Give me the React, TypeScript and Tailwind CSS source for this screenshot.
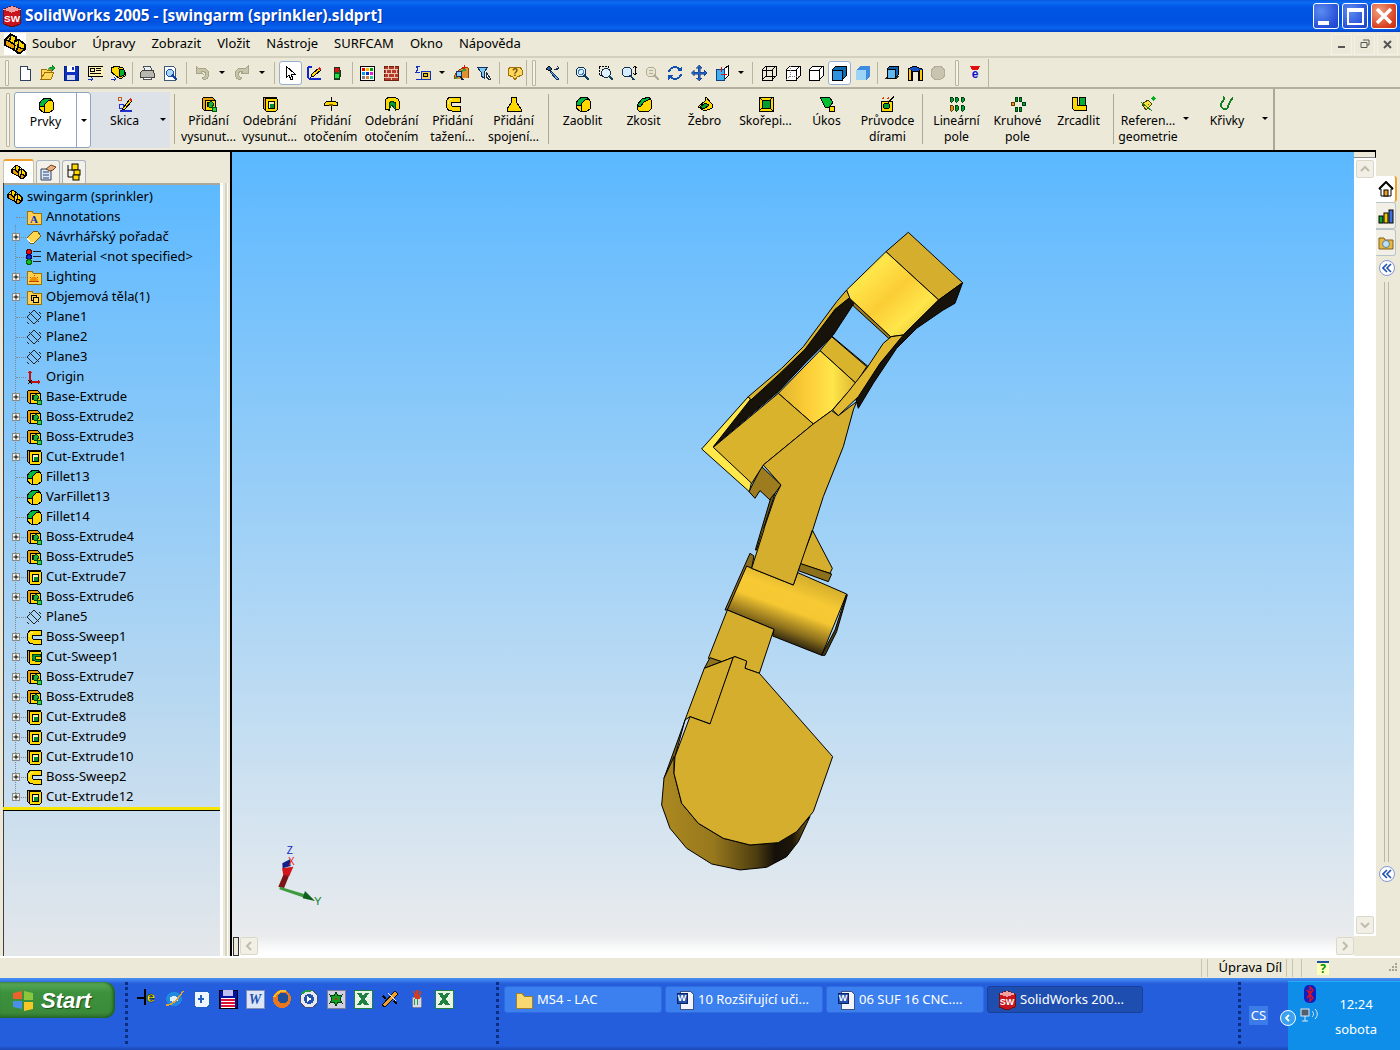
import React from 'react';

type P = { children: React.ReactNode; s?: number; v?: number };
const Svg = ({ children, s = 16, v = 16 }: P) => (
  <svg width={s} height={s} viewBox={`0 0 ${v} ${v}`} shapeRendering="crispEdges" className="shrink-0">{children}</svg>
);

const K = '#000';
const Y = '#ffd800';
const O = '#e8a000';

// feature icons shared by tree and command manager
const icons: Record<string, React.ReactNode> = {
  part: <><path d="M1 5 5 1l4 2-1 3 3-1 4 3v4l-4 3-4-3-6-3Z" fill={Y} stroke={K} strokeWidth="1.300" /><path d="M5 1 4 6l3 2 1-2M11 5l-1 5 5 2" stroke={K} fill="none" /><path d="M4 6 1 5v4l6 3 1-3Z" fill={O} stroke={K} /><path d="M10 10l-1 3 2 2 4-3Z" fill={O} stroke={K} /></>,
  boss: <><path d="M1 3 3 1h8l3 3v10H3l-2-2Z" fill={O} stroke={K} /><path d="M4 4h10v10H4Z" fill={Y} stroke={K} /><path d="M6 6h4v4H6Z" fill="#fff6b0" stroke={K} /><path d="M7 8l3-3 3 3-2 3H8Z" fill="#20b040" stroke="#004010" /><rect x="11" y="11" width="4" height="4" fill="#30d050" stroke="#005010" /></>,
  cut: <><path d="M1 2 3 1h11v13H3L1 12Z" fill={O} stroke={K} /><rect x="3" y="2" width="12" height="13" rx="1" fill={Y} stroke={K} /><rect x="6" y="5" width="6" height="7" fill="#fff5b0" stroke={K} /><path d="M8 8h4v4H8Z" fill="#009030" /></>,
  fillet: <><path d="M1 7Q3 2 8 1h4l3 4v8l-3 2H5l-4-3Z" fill={Y} stroke={K} /><path d="M1 8Q3 2 8 1h4l1 2Q8 4 6 9l-3 1Z" fill="#00b840" stroke={K} /><path d="M13 3l2 2M6 9l1 6" stroke={K} /></>,
  sweep: <><path d="M15 1H7C3 1 1 4 1 8s2 7 6 7h8V10H7C6.500 10 6 9 6 8s.500-2 1-2h8Z" fill={Y} stroke={K} /><path d="M3 8c0-2 2-4 4-5" stroke="#fff7a0" fill="none" /></>,
  sweepcut: <><path d="M1 2 3 1h11v13H3L1 12Z" fill={O} stroke={K} /><rect x="3" y="2" width="12" height="13" rx="1" fill={Y} stroke={K} /><path d="M14 5H9C7 5 6 7 6 8.500S7 12 9 12h5v-2H9V7h5Z" fill="#00a030" stroke="#004010" /></>,
  folderA: <><path d="M1 4V2h5l1 2h8v11H1Z" fill="#ffd050" stroke="#a07000" /><text x="8" y="13.500" fontSize="11" fontWeight="700" fontFamily="Liberation Serif" fill="#1030c0" textAnchor="middle">A</text></>,
  book: <><path d="M1 9 8 2h3l4 5-7 7H4Z" fill="#ffd850" stroke="#7a5a00" /><path d="M1 9l3 4h4" fill="none" stroke="#fff" /></>,
  material: <><circle cx="3" cy="3" r="2.400" fill="#e01010" stroke="#600" /><circle cx="3" cy="8" r="2.400" fill="#1030d0" stroke="#006" /><circle cx="3" cy="13" r="2.400" fill="#10c020" stroke="#060" /><path d="M7 2.500h8M7 7.500h8M7 12.500h8" stroke="#222" strokeWidth="1.500" /></>,
  lighting: <><path d="M1 4V2h5l1 2h8v11H1Z" fill="#ffd050" stroke="#a07000" /><path d="M4 12a4 4 0 0 1 8 0Z" fill="#f09000" /><path d="M8 6v1M4 8l1 1M12 8l-1 1M3 12h10" stroke="#c04000" /></>,
  bodies: <><path d="M1 4V2h5l1 2h8v11H1Z" fill="#ffd050" stroke="#a07000" /><rect x="5" y="6" width="5" height="5" fill="none" stroke={K} /><rect x="7" y="8" width="5" height="5" fill="#ffe060" stroke={K} /></>,
  plane: <path d="M1 8 8 1l7 7-7 7ZM3 3l10 10M13 3l2 2M1 13l2 2" fill="none" stroke="#222" />,
  origin: <><path d="M4 13V3M4 13h10" stroke="#c01010" strokeWidth="1.200" /><path d="M4 1 2 4h4ZM15 13l-3-2v4Z" fill="#c01010" /><path d="M2 11l4 4M6 11l-4 4" stroke={K} /></>,
  sketch: <><path d="M3 15h12" stroke="#2030d0" strokeWidth="1.400" /><circle cx="3" cy="3" r="2" fill="none" stroke="#c06020" /><path d="M2 8h4v4H2Z" fill="none" stroke="#2030d0" /><path d="M6 12 13 3l2 2-7 8-3 1Z" fill={Y} stroke={K} /><path d="M13 3l2 2" stroke="#e02020" strokeWidth="2" /></>,
  tsketch: <><path d="M2 2v10q0 2 2 2h11" fill="none" stroke="#1028d0" strokeWidth="1.600" /><path d="M2 2h4" stroke="#1028d0" strokeWidth="1.600" /><path d="M5 12l1-3 7-6 2 2-7 6Z" fill={Y} stroke={K} /><path d="M13 3l2 2" stroke="#e02020" strokeWidth="2" /></>,
  revolve: <><path d="M8 1v14" stroke={K} /><path d="M1 9c0-3 3-4 7-4s7 1 7 4l-3 1-4-2-4 2Z" fill={Y} stroke={K} /><ellipse cx="8" cy="9" rx="2" ry="1" fill="#806000" /></>,
  revolvecut: <><path d="M1 13V5c0-2 3-4 7-4s7 2 7 4v8l-4 1V6H5v8Z" fill={Y} stroke={K} /><path d="M5 13V7l3-2 3 2v6L8 9Z" fill="#00a030" stroke="#004010" /></>,
  loft: <path d="M6 1h4l1 6 4 6v2H1v-2l4-6Z" fill={Y} stroke={K} />,
  chamfer: <><path d="M1 9 6 3l7-2 2 3v9l-2 2H3l-2-2Z" fill={Y} stroke={K} /><path d="M1 9 6 3l7-2 1 2-6 3-4 5Z" fill="#00b840" stroke={K} /></>,
  rib: <><path d="M1 11 8 5l1-4 6 7v4l-7 3Z" fill={Y} stroke={K} /><path d="M3 11 8 7l4 2-5 4Z" fill="#00a030" stroke={K} /></>,
  shell: <><rect x="1" y="1" width="14" height="14" fill={Y} stroke={K} /><rect x="4" y="4" width="8" height="8" fill="#00a030" stroke={K} /><path d="M1 1l3 3M15 1l-3 3M1 15l3-3M15 15l-3-3" stroke={K} /></>,
  draft: <><path d="M1 1h9l4 5-3 5H6Z" fill="#00c030" stroke={K} /><rect x="10" y="10" width="5" height="5" fill={Y} stroke={K} /></>,
  hole: <><rect x="1" y="5" width="11" height="10" fill={Y} stroke={K} /><circle cx="6.500" cy="10" r="3" fill="#00a030" stroke={K} /><path d="M8 6l6-5" stroke={K} strokeWidth="1.600" /><path d="M2 2h2M3 1v2M7 2h2M8 1v2" stroke="#e04000" /></>,
  linear: <><g fill="#00a030" stroke="#004010"><rect x="1" y="1" width="3" height="5" rx="1" /><rect x="6" y="1" width="3" height="5" rx="1" /><rect x="12" y="1" width="3" height="5" rx="1" /><rect x="6" y="9" width="3" height="6" rx="1" /><rect x="12" y="9" width="3" height="6" rx="1" /></g><rect x="1" y="9" width="3" height="6" rx="1" fill="#f09000" stroke="#604000" /></>,
  circular: <><g fill="#00a030" stroke="#004010"><rect x="5" y="1" width="2" height="4" /><rect x="9" y="1" width="2" height="4" /><rect x="5" y="11" width="2" height="4" /><rect x="9" y="11" width="2" height="4" /><rect x="12" y="6" width="3" height="3" /></g><rect x="1" y="6" width="3" height="3" fill="#f09000" stroke="#604000" /></>,
  mirror: <><path d="M1 1h5v8h9v5H3l-2-2Z" fill={Y} stroke={K} /><rect x="8" y="1" width="6" height="8" fill="#00b030" stroke={K} /></>,
  refgeom: <><path d="M2 8 8 4l4 4-6 6Z" fill="#ffe040" stroke="#404000" /><path d="M1 6l11 9M8 8l1 1" stroke="#208020" /><path d="M12 4l3-3M15 4l-3-3M13 0v5M11 2h5" stroke="#00b020" /></>,
  curves: <path d="M4 1c4 2-2 4-2 8 0 4 6 6 7 2 1-3 1-6 5-9" fill="none" stroke="#108020" strokeWidth="1.800" />,
  // standard toolbar
  new: <><path d="M3 1h7l3 3v11H3Z" fill="#fff" stroke="#304060" /><path d="M10 1v3h3" fill="#d8e4f8" stroke="#304060" /></>,
  open: <><path d="M1 14V4h5l1 1h4v2H5l-4 7h10l3-7H5" fill="#ffd860" stroke="#a07000" /><path d="M8 4c1-2 3-2 4-2V0l3 3-3 3V4c-1 0-3 0-4 0Z" fill="#10b030" stroke="#006000" strokeWidth=".500" /></>,
  save: <><rect x="1" y="1" width="14" height="14" fill="#1030c0" stroke="#002080" /><rect x="4" y="1" width="8" height="6" fill="#fff" /><rect x="4" y="10" width="8" height="5" fill="#d0d8f0" /><rect x="9" y="2" width="2" height="3" fill="#1030c0" /></>,
  props: <><rect x="1" y="1" width="15" height="10" fill="#fff0b0" stroke={K} /><path d="M3 3h4v3H3ZM9 3h5M9 5h5M3 8h11" stroke={K} fill="none" /><path d="M1 14h5M4 12l2 2-2 2" stroke="#1030c0" fill="none" /></>,
  rebuild: <><path d="M1 3 6 1l7 2 2 4v4l-5 3-5-4-4-3Z" fill={Y} stroke={K} /><path d="M9 4l5 1v5l-4 2Z" fill="#00b030" stroke={K} /><path d="M1 14h5M4 12l2 2-2 2" stroke="#1030c0" fill="none" /></>,
  print: <><path d="M4 1h7l2 4H6Z" fill="#eee" stroke="#405060" /><path d="M1 8l3-3h10l1 3v4H1Z" fill="#b8b8b0" stroke="#404040" /><path d="M4 12h8v2H4Z" fill="#fff" stroke="#505050" /></>,
  preview: <><path d="M2 1h9l2 2v12H2Z" fill="#fff" stroke="#405878" /><circle cx="8" cy="8" r="3.500" fill="#a8d8ff" stroke="#2050a0" /><path d="M10 10 15 15" stroke="#1040a0" strokeWidth="2" /></>,
  undo: <path d="M2 8V1l3 3c4-2 10 0 10 5 0 3-2 5-5 6l-2-2c2-1 4-2 4-4s-3-3-5-2l2 2Z" fill="#c8c4a8" stroke="#a8a48c" />,
  redo: <path d="M14 8V1l-3 3C7 2 1 4 1 9c0 3 2 5 5 6l2-2c-2-1-4-2-4-4s3-3 5-2L7 8Z" fill="#c8c4a8" stroke="#a8a48c" />,
  cursor: <path d="M4 1v12l3-3 2 5 2-1-2-5h4Z" fill="#fff" stroke={K} />,
  traffic: <><rect x="5" y="2" width="6" height="13" rx="3" fill="#106020" stroke="#203020" /><circle cx="8" cy="5" r="2.400" fill="#e01010" /><circle cx="8" cy="11" r="2.400" fill="#20e040" /></>,
  grid: <><rect x="1" y="1" width="14" height="14" fill="#fff" stroke={K} /><g><rect x="3" y="3" width="3" height="3" fill="#f00000" /><rect x="7" y="3" width="3" height="3" fill="#f0c000" /><rect x="11" y="3" width="3" height="3" fill="#00a000" /><rect x="3" y="7" width="3" height="3" fill="#00a0f0" /><rect x="7" y="7" width="3" height="3" fill="#0030d0" /><rect x="11" y="7" width="3" height="3" fill="#e020e0" /><rect x="3" y="11" width="3" height="3" fill="#808080" /><rect x="7" y="11" width="3" height="3" fill="#e08040" /><rect x="11" y="11" width="3" height="3" fill="#20d0a0" /></g></>,
  bricks: <><rect x="1" y="1" width="14" height="14" fill="#b83a2a" stroke="#702010" /><path d="M1 4h14M1 8h14M1 12h14M5 1v3M11 1v3M8 4v4M3 4v4M13 4v4M5 8v4M11 8v4M8 12v3" stroke="#e8c8b0" /></>,
  formula: <><path d="M5 1H1l2 3-2 3h4" fill="none" stroke="#1030c0" /><rect x="6" y="6" width="9" height="8" fill="#f0d060" stroke="#1030c0" /><circle cx="10.500" cy="10" r="2" fill="#e8c000" stroke={K} /><path d="M1 14h5" stroke="#1030c0" /></>,
  rainbow: <><path d="M1 14C2 6 8 2 15 3v10" fill="#e09030" stroke="#a04000" /><path d="M3 14C4 8 9 5 13 5" stroke="#30a040" strokeWidth="2" fill="none" /><circle cx="6" cy="9" r="3" fill="#80d0ff" stroke="#203060" /><path d="M7 11 10 15" stroke="#102040" strokeWidth="2" /><path d="M11 0v3M9 2h4" stroke="#e01010" /></>,
  filter: <><path d="M1 2h11L8 7v6l-3-2V7Z" fill="#80c8f0" stroke="#103060" /><path d="M10 7l2 3 3 4-2 1-3-4Z" fill="#fff" stroke="#203040" /></>,
  help: <><path d="M3 2h10l2 3v5l-5 2-2 3-2-3-5-2V5Z" fill="#ffd860" stroke="#a07000" /><text x="8" y="11" fontSize="10" fontWeight="700" textAnchor="middle" fontFamily="Liberation Sans" fill="#705000">?</text></>,
  tool: <><path d="M1 4l3-3 3 3-2 2Z" fill="#2060a0" stroke={K} /><path d="M6 6l8 8-2 1-7-8Z" fill="#70b0e0" stroke="#103060" /><path d="M9 5l5-2M12 1l2 2-2 2" stroke="#203050" fill="none" /></>,
  zoomfit: <><circle cx="7" cy="7" r="5" fill="#e0f0ff" stroke="#103050" /><circle cx="7" cy="7" r="2.500" fill="none" stroke="#4080c0" /><path d="M10 10 15 15" stroke="#104060" strokeWidth="2" /></>,
  zoomarea: <><rect x="1" y="1" width="9" height="9" fill="none" stroke={K} strokeDasharray="2 1" /><circle cx="8" cy="8" r="4.500" fill="#e0f0ff" stroke="#103050" /><path d="M11 11l4 4" stroke="#104060" strokeWidth="2" /></>,
  zoominout: <><circle cx="6" cy="7" r="5" fill="#d8ecff" stroke="#103050" /><path d="M9 10 13 15" stroke="#104060" strokeWidth="2" /><path d="M14 1v9M12 3l2-2 2 2M12 8l2 2 2-2" stroke={K} fill="none" /></>,
  zoomsel: <><circle cx="7" cy="7" r="5" fill="#e8e4d0" stroke="#b0ac98" /><path d="M5 5h4M5 8h4" stroke="#b0ac98" /><path d="M10 10 15 15" stroke="#b0ac98" strokeWidth="2" /></>,
  rotate: <><path d="M2 7a6 6 0 0 1 11-2" fill="none" stroke="#1050b0" strokeWidth="2" /><path d="M14 9A6 6 0 0 1 3 11" fill="none" stroke="#1050b0" strokeWidth="2" /><path d="M15 1v5h-5ZM1 15v-5h5Z" fill="#1050b0" /></>,
  pan: <path d="M8 0l3 3H9v4h4V5l3 3-3 3V9H9v4h2l-3 3-3-3h2V9H3v2L0 8l3-3v2h4V3H5Z" fill="#2060c0" stroke="#103070" strokeWidth=".500" />,
  view: <><path d="M2 4h8l4-3v10l-4 4H2Z" fill="#fff" stroke={K} /><path d="M2 4h8v11H2Z" fill="#40b0f0" stroke="#104080" /><path d="M7 9h6M7 2v5" stroke="#e01010" /></>,
  wire: <path d="M1 5h10v10H1ZM1 5l4-4h10v10l-4 4M11 5l4-4M5 1v10h10M5 11l-4 4" fill="none" stroke={K} />,
  hidden: <><path d="M1 5h10v10H1ZM1 5l4-4h10v10l-4 4M11 5l4-4" fill="#fff" stroke={K} /><path d="M5 1v10h10M5 11l-4 4" fill="none" stroke="#808080" strokeDasharray="1 1" /></>,
  hlr: <path d="M1 5h10v10H1ZM1 5l4-4h10v10l-4 4M11 5l4-4" fill="#fff" stroke={K} />,
  shadededge: <><path d="M1 5l4-4h10v10l-4 4Z" fill="#106ab0" stroke={K} /><path d="M1 5h10v10H1Z" fill="#2f92e0" stroke={K} /></>,
  shaded: <><path d="M1 5l4-4h10v10l-4 4Z" fill="#3c8ce0" /><path d="M1 5h10v10H1Z" fill="#9cd4f8" /></>,
  shadow: <><path d="M0 14h12l3-3H3Z" fill="#303020" /><path d="M3 4l3-3h8v9l-3 3H3Z" fill="#1060b0" stroke={K} /><path d="M3 4h8v9H3Z" fill="#60b8f0" stroke={K} /></>,
  section: <><path d="M1 4 7 1l8 3v11h-4V6H5v9H1Z" fill="#1050c0" stroke={K} /><path d="M1 4v11h3V5M12 5v10h3V5" fill="#ffc800" stroke={K} /></>,
  rw: <circle cx="8" cy="8" r="7" fill="#c8c4b0" stroke="#b0ac98" />,
  ebook: <><path d="M3 1h10l-2 4H5Z" fill="#e01010" /><text x="8" y="13" fontSize="12" fontWeight="700" textAnchor="middle" fontFamily="Liberation Sans" fill="#1010d0">e</text></>,
};

const Icon = ({ n, s = 16 }: { n: string; s?: number }) => <Svg s={s}>{icons[n]}</Svg>;

const Grip = () => (
  <div className="h-[26px] w-[4px] mx-auto border border-[#b8b4a0] bg-[#f6f4ea] rounded-[1px]" />
);
const Sep = ({ w }: { w: string }) => (
  <div className={`${w} h-[22px] flex justify-center`}>
    <div className="w-px h-full bg-[#b8b4a0]" />
  </div>
);
const Drop = ({ w }: { w: string }) => (
  <div className={`${w} flex justify-center`}>
    <div className="w-0 h-0 border-x-[3px] border-t-[3px] border-x-transparent border-t-black" />
  </div>
);
const Tool = ({ n, on }: { n: string; on?: boolean }) => (
  <div
    className={`w-[23.3px] h-[24px] flex items-center justify-center ${
      on ? 'border border-[#97b0d0] bg-white rounded-[3px]' : ''
    }`}
  >
    <Icon n={n} />
  </div>
);

const CmdBtn = ({ n, a, b, w = 'w-[61px]' }: { n: string; a: string; b?: string; w?: string }) => (
  <div className={`${w} h-full flex flex-col items-center pt-[7px] text-center`}>
    <Icon n={n} />
    <div className="leading-[16px] mt-[1px] whitespace-nowrap">{a}</div>
    {b && <div className="leading-[16px] whitespace-nowrap">{b}</div>}
  </div>
);
const CmdSep = () => <div className="w-px h-[50px] bg-[#aca899] ml-[4px] mr-[3px] my-[5px] shrink-0" />;

const TitleButton = ({ kind }: { kind: string }) => (
  <div
    className={`w-[26px] h-[26px] rounded-[3px] border border-white flex items-center justify-center ${
      kind === 'close'
        ? 'bg-[radial-gradient(circle_at_30%_30%,#f0a080,#d84020_70%,#c03010)]'
        : 'bg-[radial-gradient(circle_at_30%_30%,#5c8cf0,#2850d8_70%,#1c40c0)]'
    }`}
  >
    {kind === 'min' && <div className="w-[11px] h-[4px] bg-white mt-[14px] mr-[6px]" />}
    {kind === 'max' && <div className="w-[17px] h-[17px] border-2 border-t-4 border-white" />}
    {kind === 'close' && (
      <svg width="20" height="20" viewBox="0 0 20 20">
        <path d="M3 3 17 17M17 3 3 17" stroke="#fff" strokeWidth="3.400" />
      </svg>
    )}
  </div>
);

const MdiButton = ({ children }: { children: React.ReactNode }) => (
  <div className="w-[21px] h-[21px] border border-[#f4f2e8] flex items-center justify-center text-[#555]">
    {children}
  </div>
);

const treeRows: [string, string, boolean][] = [
  ['folderA', 'Annotations', false],
  ['book', 'Návrhářský pořadač', true],
  ['material', 'Material <not specified>', false],
  ['lighting', 'Lighting', true],
  ['bodies', 'Objemová těla(1)', true],
  ['plane', 'Plane1', false],
  ['plane', 'Plane2', false],
  ['plane', 'Plane3', false],
  ['origin', 'Origin', false],
  ['boss', 'Base-Extrude', true],
  ['boss', 'Boss-Extrude2', true],
  ['boss', 'Boss-Extrude3', true],
  ['cut', 'Cut-Extrude1', true],
  ['fillet', 'Fillet13', false],
  ['fillet', 'VarFillet13', false],
  ['fillet', 'Fillet14', false],
  ['boss', 'Boss-Extrude4', true],
  ['boss', 'Boss-Extrude5', true],
  ['cut', 'Cut-Extrude7', true],
  ['boss', 'Boss-Extrude6', true],
  ['plane', 'Plane5', false],
  ['sweep', 'Boss-Sweep1', true],
  ['sweepcut', 'Cut-Sweep1', true],
  ['boss', 'Boss-Extrude7', true],
  ['boss', 'Boss-Extrude8', true],
  ['cut', 'Cut-Extrude8', true],
  ['cut', 'Cut-Extrude9', true],
  ['cut', 'Cut-Extrude10', true],
  ['sweep', 'Boss-Sweep2', true],
  ['cut', 'Cut-Extrude12', true],
];

const TreeRow = ({ n, label, plus }: { n: string; label: string; plus: boolean }) => (
  <div className="h-5 flex items-center">
    <div className="w-[22px] h-full flex items-center relative">
      <div className="absolute left-[12px] right-0 top-[10px] border-t border-dotted border-[#808890]" />
      {plus && (
        <div className="relative ml-[8px] w-[8px] h-[8px] border border-[#8a8a8a] bg-[#f2f2ea] flex items-center justify-center">
          <svg width="6" height="6" viewBox="0 0 6 6" className="absolute left-0 top-0">
            <path d="M0.500 3h5M3 0.500v5" stroke="#000" />
          </svg>
        </div>
      )}
    </div>
    <Icon n={n} />
    <span className="ml-[4px] whitespace-nowrap">{label}</span>
  </div>
);

const FeatureTree = () => (
  <div className="w-[230px] shrink-0 flex flex-col pt-[5px]">
    <div className="h-[26px] pl-[3px] flex items-end gap-[2px]">
      <div className="w-[31px] h-[24px] bg-white border-t-2 border-t-[#f0a030] border-x border-x-[#c8c4b0] rounded-t-[3px] flex items-center justify-center">
        <Icon n="part" />
      </div>
      <div className="w-[24px] h-[23px] bg-[#f4f2e8] border-t border-x border-[#a8b4c0] rounded-t-[3px] flex items-center justify-center">
        <svg width="18" height="18" viewBox="0 0 18 18">
          <path d="M2 6h10v11H2Z" fill="#d8e8ff" stroke="#304060" />
          <path d="M4 9h6M4 12h6M4 15h6" stroke="#304060" />
          <path d="M7 6 12 2l5 2-3 3-3 1Z" fill="#e8b080" stroke="#704020" />
        </svg>
      </div>
      <div className="w-[24px] h-[23px] bg-[#f4f2e8] border-t border-x border-[#a8b4c0] rounded-t-[3px] flex items-center justify-center">
        <svg width="18" height="18" viewBox="0 0 18 18">
          <path d="M3 2v12M3 7h5M3 14h5" stroke="#000" fill="none" />
          <rect x="7" y="1" width="6" height="6" fill="#ffd800" stroke="#000" />
          <rect x="9" y="7" width="6" height="5" fill="#ffd800" stroke="#000" />
          <rect x="8" y="12" width="6" height="5" fill="#ffd800" stroke="#000" />
        </svg>
      </div>
    </div>
    <div className="flex-1 flex min-h-0">
      <div className="w-[4px] border-l-[3px] border-l-[#ece9d8] bg-[#404040]" />
      <div className="w-[216px] border-t-[2px] border-t-[#aca899] bg-[linear-gradient(#5db9ff,#e4e7ea)] relative pt-[2px]">
        <div className="absolute left-[11px] top-[40px] h-[570px] border-l border-dotted border-[#808890]" />
        <div className="h-5 flex items-center pl-[3px]">
          <Icon n="part" />
          <span className="ml-[4px] whitespace-nowrap">swingarm (sprinkler)</span>
        </div>
        {treeRows.map(([n, label, plus], i) => (
          <TreeRow key={i} n={n} label={label} plus={plus} />
        ))}
        <div className="h-[4px] bg-[#f4e400] border-b border-black -ml-[1px]" />
      </div>
      <div className="flex-1 flex">
        <div className="w-[3px] bg-white" />
        <div className="w-[2px]" />
        <div className="w-[3px] bg-[#d8d4c0] border-r border-white" />
      </div>
    </div>
  </div>
);

const ScrollBtn = ({ d }: { d: string }) => (
  <div className="w-[18px] h-[18px] bg-[#f2f0e6] border border-[#dcd8c8] rounded-[2px] flex items-center justify-center">
    <svg width="10" height="10" viewBox="0 0 10 10">
      <path d={d} fill="none" stroke="#c0bcac" strokeWidth="2" />
    </svg>
  </div>
);

// the rendered swingarm part, traced in 3x crop coordinates
const Model = () => (
  <svg
    width="340"
    height="660"
    viewBox="640 220 340 660"
    className="absolute left-[408px] top-[68px]"
  >
    <defs>
      <linearGradient id="bandTop" x1="0" y1="0" x2="1" y2="1">
        <stop offset="0" stopColor="#d4ae2c" />
        <stop offset=".25" stopColor="#ffe64a" />
        <stop offset=".5" stopColor="#fbcd35" />
        <stop offset=".72" stopColor="#ffe64a" />
        <stop offset="1" stopColor="#d4ae2c" />
      </linearGradient>
      <linearGradient id="bandMid" x1="0" y1="0" x2="1" y2="0">
        <stop offset="0" stopColor="#dcb52e" />
        <stop offset=".35" stopColor="#fccb35" />
        <stop offset=".7" stopColor="#ffe64a" />
        <stop offset="1" stopColor="#dcb52e" />
      </linearGradient>
      <linearGradient id="cyl" gradientUnits="userSpaceOnUse" x1="440" y1="110" x2="360" y2="330">
        <stop offset="0" stopColor="#c9a52a" />
        <stop offset=".35" stopColor="#f7ca34" />
        <stop offset=".55" stopColor="#f5c732" />
        <stop offset=".8" stopColor="#8a6e1c" />
        <stop offset="1" stopColor="#14100a" />
      </linearGradient>
      <linearGradient id="rim" gradientUnits="userSpaceOnUse" x1="40" y1="0" x2="470" y2="0">
        <stop offset="0" stopColor="#ab8820" />
        <stop offset=".35" stopColor="#97781d" />
        <stop offset=".65" stopColor="#4d3d10" />
        <stop offset=".78" stopColor="#14100a" />
        <stop offset=".9" stopColor="#1d1709" />
        <stop offset="1" stopColor="#6d5715" />
      </linearGradient>
    </defs>
    <g transform="translate(650 530) scale(.3333)" stroke="#000" strokeWidth="3" strokeLinejoin="round">
      <path d="M487 0 547 115 540 130 445 100Z" fill="#d4ae2c" />
      <path d="M450 100 545 132 535 155 445 122Z" fill="#8c701c" />
      <path d="M300 70 312 78 305 115 290 120 240 225 232 240 225 240Z" fill="#8a6d1c" />
      <path d="M290 108 305 115 430 165 443 128 590 192 515 376 368 318 372 298 232 240Z" fill="url(#cyl)" />
      <path d="M590 192 555 300 515 376 525 376 560 305 592 195Z" fill="#4a3a10" />
      <path d="M232 240 372 298 328 430 285 415 290 395 255 380 215 395 175 385Z" fill="#d4ae2c" />
      <path d="M180 383 215 395 163 415Z" fill="#8f731f" />
      <path d="M105 570 75 680 42 745 100 585Z" fill="#7a611a" />
      <path d="M72 680 42 745 35 825 60 895 110 955 185 1002 270 1020 350 1012 410 980 445 935 480 860 440 905 385 938 300 945 220 925 145 880 95 820 72 730Z" fill="url(#rim)" />
      <path d="M163 415 250 382 182 582 120 560 105 570Z" fill="#d4ae2c" />
      <path d="M255 380 290 393 285 415 328 430 548 680 490 845 440 905 385 938 300 945 220 925 145 880 95 820 72 730 75 680 120 560 180 582 250 382Z" fill="#d4ae2c" />
    </g>
    <g transform="translate(650 220) scale(.3333)" stroke="#000" strokeWidth="3" strokeLinejoin="round">
      <path d="M600 236 722 350 716 355 610 258Z" fill="#9c7c1e" />
      <path d="M545 348 655 440 650 448 540 355Z" fill="#9c7c1e" />
      <path d="M510 392 545 350 650 440 618 490Z" fill="#dab32c" />
      <path d="M335 740 393 795 375 820 360 840 330 812 315 835 297 815Z" fill="#9c7c1e" />
      <path d="M375 820 320 990 316 990 362 835Z" fill="#6f5814" />
      <path d="M155 687 295 530 305 545 192 682 305 785 298 815Z" fill="#ffe84a" />
      <path d="M612 250 550 345 470 425 385 515 190 680 300 540 385 460 465 385 555 265 600 232Z" fill="#17130a" />
      <path d="M590 210 560 245 460 380 395 445 295 530 303 540 388 462 465 388 555 268 600 232Z" fill="#dcb52e" />
      <path d="M385 520 510 392 618 490 545 572 490 612Z" fill="url(#bandMid)" />
      <path d="M190 682 385 520 490 612 340 735 305 790Z" fill="#dab32c" />
      <path d="M775 37 938 188 866 240 708 95Z" fill="#d4ae2c" />
      <path d="M708 95 866 240 760 345 722 350 600 236 590 210Z" fill="url(#bandTop)" />
      <path d="M866 240 938 188 915 250 880 270 800 325 740 385 670 490 625 565 618 540 690 430 760 345Z" fill="#17130a" />
      <path d="M724 350 760 345 690 430 625 530 565 587 548 570 595 515 650 445 700 370Z" fill="#e2ba31" />
      <path d="M340 735 490 612 545 572 565 587 620 545 610 570 580 680 520 830 485 940 465 990 320 990 375 830 393 795Z" fill="#d4ae2c" />
    </g>
    <g transform="translate(650 530) scale(.3333)">
      <path d="M340 -4 487 -4 430 165 305 115Z" fill="#d4ae2c" />
      <path d="M343 -4 305 115 430 165 487 0" fill="none" stroke="#000" strokeWidth="3" />
    </g>
  </svg>
);

const Triad = () => (
  <svg width="80" height="90" viewBox="0 0 240 270" className="absolute left-[28px] top-[678px]">
    <path d="M55 170 72 130 88 135 72 175Z" fill="#7a1515" />
    <path d="M66 115 100 110 88 138 70 135Z" fill="#d01818" />
    <path d="M67 100 90 88 92 108 68 115Z" fill="#14208a" />
    <path d="M60 170 132 192 135 204 58 178Z" fill="#3f9a3f" />
    <path d="M135 183 165 213 128 205Z" fill="#0f5f1f" />
    <text x="80" y="72" fontSize="30" fill="#1020c0" fontFamily="Liberation Sans">Z</text>
    <text x="84" y="104" fontSize="30" fill="#f01010" fontFamily="Liberation Sans">X</text>
    <text x="162" y="226" fontSize="34" fill="#108030" fontFamily="Liberation Sans">Y</text>
  </svg>
);

const Viewport = () => (
  <div className="flex-1 flex flex-col border-l-2 border-l-black min-w-0">
    <div className="flex-1 flex min-h-0">
      <div className="flex-1 relative bg-[linear-gradient(#5bb8ff,#e9ebed)] overflow-hidden">
        <Model />
        <Triad />
      </div>
      <div className="w-[22px] bg-white flex flex-col items-center">
        <div className="w-full h-[6px] bg-[#ece9d8] border-b border-[#888] border-r border-r-black" />
        <div className="mt-[2px]">
          <ScrollBtn d="M1 7 5 3l4 4" />
        </div>
        <div className="flex-1" />
        <div className="mb-[2px]">
          <ScrollBtn d="M1 3 5 7l4-4" />
        </div>
      </div>
    </div>
    <div className="h-[20px] flex">
      <div className="flex-1 flex items-center bg-[linear-gradient(#e9ebed,#fff_85%)]">
        <div className="w-[6px] h-[19px] bg-[#ece9d8] border border-[#333] ml-[1px] mr-[1px]" />
        <ScrollBtn d="M7 1 3 5l4 4" />
        <div className="flex-1" />
        <ScrollBtn d="M3 1 7 5 3 9" />
      </div>
      <div className="w-[22px]" />
    </div>
  </div>
);

const Chevrons = () => (
  <div className="w-[16px] h-[16px] rounded-full border border-[#8098d8] bg-white flex items-center justify-center">
    <svg width="10" height="10" viewBox="0 0 10 10">
      <path d="M5 1 1 5l4 4M9 1 5 5l4 4" fill="none" stroke="#2050b0" strokeWidth="1.600" />
    </svg>
  </div>
);

const TaskPane = () => (
  <div className="w-[24px] shrink-0 flex flex-col pt-[26px]">
    <div className="h-[26px] w-[21px] bg-white border-r-2 border-r-[#f0a030] rounded-r-[3px] flex items-center justify-center">
      <svg width="16" height="16" viewBox="0 0 16 16">
        <path d="M1 8 8 1l7 7-2 0v7H3V8Z" fill="#fff" stroke="#000" />
        <path d="M1 8 8 1l7 7" fill="none" stroke="#000" strokeWidth="2" />
        <rect x="6" y="9" width="4" height="6" fill="#f0a020" stroke="#000" />
      </svg>
    </div>
    <div className="h-[27px] w-[20px] bg-[#f2f0e6] border border-l-0 border-[#b8c4c8] rounded-r-[3px] flex items-center justify-center">
      <svg width="16" height="16" viewBox="0 0 16 16">
        <rect x="1" y="8" width="4" height="7" fill="#10a030" stroke="#000" />
        <rect x="6" y="5" width="4" height="10" fill="#f0c800" stroke="#000" />
        <rect x="11" y="2" width="4" height="13" fill="#4070e0" stroke="#000" />
      </svg>
    </div>
    <div className="h-[27px] w-[20px] bg-[#f2f0e6] border border-l-0 border-[#b8c4c8] rounded-r-[3px] flex items-center justify-center">
      <svg width="16" height="16" viewBox="0 0 16 16">
        <path d="M1 3h5l1 2h8v9H1Z" fill="#e8b840" stroke="#806020" />
        <circle cx="8" cy="9" r="3.500" fill="#c0e0f8" stroke="#608090" />
      </svg>
    </div>
    <div className="pl-[3px] mt-[4px]">
      <Chevrons />
    </div>
    <div className="flex-1 flex justify-center min-h-0 mt-[6px]">
      <div className="w-[5px] mr-[3px] border-x border-[#bcb8a8]" />
    </div>
    <div className="pl-[3px] mt-[4px] mb-[74px]">
      <Chevrons />
    </div>
  </div>
);

const quick: React.ReactNode[] = [
  <><path d="M8 0v16M0 9h8" stroke="#000" strokeWidth="2" /><text x="14" y="13" fontSize="15" fontWeight="700" textAnchor="middle" fontFamily="Liberation Sans" fill="#e8e800" stroke="#000" strokeWidth=".400">e</text></>,
  <><ellipse cx="10" cy="10" rx="8" ry="7" fill="#2088e0" /><ellipse cx="10" cy="10" rx="4" ry="3" fill="#d8f0ff" /><path d="M2 16C8 17 16 8 19 2" fill="none" stroke="#e8a030" strokeWidth="1.500" /></>,
  <><rect x="3" y="2" width="15" height="16" rx="2" fill="#f0f6ff" stroke="#2060c0" /><path d="M7 10h6M10 6v8" stroke="#2060c0" strokeWidth="2" /></>,
  <><rect x="1" y="1" width="18" height="18" fill="#0010a0" stroke="#000" /><rect x="5" y="1" width="10" height="6" fill="#c0c0f0" /><rect x="3" y="9" width="14" height="10" fill="#fff" /><path d="M3 11h14M3 14h14M3 17h14" stroke="#e01030" strokeWidth="1.500" /></>,
  <><rect x="1" y="1" width="18" height="18" fill="#dde6f8" stroke="#8090b8" /><text x="10" y="15" fontSize="14" fontWeight="700" fontStyle="italic" textAnchor="middle" fontFamily="Liberation Serif" fill="#2050b0">W</text></>,
  <><circle cx="10" cy="10" r="9" fill="#e87820" /><circle cx="11" cy="9" r="5.500" fill="#20509a" /><path d="M2 8c3-5 8-7 12-6" stroke="#f8c030" strokeWidth="2" fill="none" /></>,
  <><circle cx="10" cy="10" r="9" fill="#e8e8f0" stroke="#405080" /><circle cx="10" cy="10" r="5" fill="#2050b0" /><path d="M8 7l5 3-5 3Z" fill="#fff" /><path d="M3 5A9 9 0 0 1 12 2" stroke="#20a040" strokeWidth="2" fill="none" /></>,
  <><rect x="1" y="1" width="18" height="18" fill="#d0d0e0" stroke="#808098" /><path d="M10 3l2 4 4-1-2 4 2 4-4-1-2 4-2-4-4 1 2-4-2-4 4 1Z" fill="#10a020" stroke="#004010" /><circle cx="10" cy="10" r="1.500" fill="#e02020" /></>,
  <><rect x="1" y="1" width="18" height="18" fill="#e8f4e8" stroke="#208040" /><path d="M4 4h5l1 3 2-3h4l-4 6 4 6h-5l-1-3-2 3H4l4-6Z" fill="#208040" /></>,
  <><path d="M2 16 15 2l3 3L5 18Z" fill="#f0a030" stroke="#101010" /><path d="M3 7l3 3M14 12l3 3" stroke="#000" strokeWidth="2" /><path d="M8 4l8 8" stroke="#fff" /></>,
  <><path d="M5 8h10l-1 10H6Z" fill="#d8d8e8" stroke="#8080a0" /><path d="M7 2l2 8M10 1v9M13 2l-1 8" stroke="#d04020" strokeWidth="2" /><path d="M7 10v6M10 10v6" stroke="#20a040" /></>,
  <><rect x="1" y="1" width="18" height="18" fill="#e8f4e8" stroke="#208040" /><path d="M4 4h5l1 3 2-3h4l-4 6 4 6h-5l-1-3-2 3H4l4-6Z" fill="#208040" /></>,
];

const Dots = () => (
  <div className="h-[62px] w-[4px] border-l-[3px] border-dotted border-[#0c2e80]" />
);

const TaskBtn = ({ icon, label, active }: { icon: React.ReactNode; label: string; active?: boolean }) => (
  <div
    className={`h-[27px] rounded-[3px] flex items-center pl-[9px] overflow-hidden whitespace-nowrap text-white ${
      active ? 'w-[156px] bg-[#1e4fb0] border border-[#16409a]' : 'w-[158px] bg-[#3c80f0] border border-[#2f6ce0]'
    }`}
  >
    <Svg s={20} v={20}>{icon}</Svg>
    <span className="ml-[3px]">{label}</span>
  </div>
);

const wordDoc = (
  <>
    <path d="M5 1h10l3 3v15H5Z" fill="#f0f4ff" stroke="#405080" />
    <rect x="2" y="3" width="10" height="10" fill="#2050b0" stroke="#102060" />
    <text x="7" y="11" fontSize="9" fontWeight="700" textAnchor="middle" fontFamily="Liberation Sans" fill="#fff">W</text>
  </>
);
const swLogo = (
  <>
    <path d="M2 4 10 1l8 3v13l-8 3-8-3Z" fill="#c8141c" stroke="#701010" />
    <path d="M2 4 10 1l8 3-8 3Z" fill="#f0a0a0" />
    <text x="10" y="15" fontSize="9" fontWeight="700" textAnchor="middle" fontFamily="Liberation Sans" fill="#fff">SW</text>
  </>
);

export default function App() {
  return (
    <div className="w-[1400px] h-[1050px] overflow-hidden flex flex-col bg-[#ece9d8] text-black text-[13px] font-['Noto_Sans','Liberation_Sans',sans-serif]">
      {/* title bar */}
      <div className="h-[32px] shrink-0 flex items-center bg-[linear-gradient(#0a5ae0,#0a6cf4_8%,#0056e6_22%,#0052e0_70%,#0a64ee_88%,#0042c8)] pl-[1px] pr-[3px]">
        <Svg s={22} v={20}>{swLogo}</Svg>
        <span className="ml-[2px] text-white font-bold text-[15.400px] [text-shadow:1px_1px_0_#0030a0]">
          SolidWorks 2005 - [swingarm (sprinkler).sldprt]
        </span>
        <div className="ml-auto flex gap-[3px]">
          <TitleButton kind="min" />
          <TitleButton kind="max" />
          <TitleButton kind="close" />
        </div>
      </div>

      {/* menu */}
      <div className="h-[24px] shrink-0 flex items-center pl-[4px] pr-[2px]">
        <div className="bg-white w-[22px] h-[22px] flex items-center justify-center">
          <Svg s={22}>{icons.part}</Svg>
        </div>
        <div className="flex gap-[16px] ml-[6px]">
          {['Soubor', 'Úpravy', 'Zobrazit', 'Vložit', 'Nástroje', 'SURFCAM', 'Okno', 'Nápověda'].map((m) => (
            <span key={m}>{m}</span>
          ))}
        </div>
        <div className="ml-auto flex gap-[2px]">
          <MdiButton>
            <div className="w-[7px] h-[2px] bg-[#555] mt-[6px]" />
          </MdiButton>
          <MdiButton>
            <svg width="10" height="10" viewBox="0 0 10 10">
              <path d="M3 1h6v5H7M1 3.500h6v5H1Z" fill="none" stroke="#555" />
            </svg>
          </MdiButton>
          <MdiButton>
            <svg width="9" height="9" viewBox="0 0 9 9">
              <path d="M1 1 8 8M8 1 1 8" stroke="#555" strokeWidth="2" />
            </svg>
          </MdiButton>
        </div>
      </div>

      {/* standard toolbar */}
      <div className="h-[33px] shrink-0 border-t-2 border-t-[#d4d0c0] border-b-[2px] border-b-[#b4b0a0] flex items-center">
        <div className="w-[13px]"><Grip /></div>
        {['new', 'open', 'save', 'props', 'rebuild'].map((n) => <Tool key={n} n={n} />)}
        <Sep w="w-[6px]" />
        {['print', 'preview'].map((n) => <Tool key={n} n={n} />)}
        <Sep w="w-[8px]" />
        <Tool n="undo" />
        <Drop w="w-[17px]" />
        <Tool n="redo" />
        <Drop w="w-[16px]" />
        <Sep w="w-[9px]" />
        <Tool n="cursor" on />
        <Tool n="tsketch" />
        <Tool n="traffic" />
        <Sep w="w-[7px]" />
        <Tool n="grid" />
        <Tool n="bricks" />
        <Sep w="w-[9px]" />
        <Tool n="formula" />
        <Drop w="w-[15px]" />
        <Tool n="rainbow" />
        <Tool n="filter" />
        <Sep w="w-[7px]" />
        <Tool n="help" />
        <div className="w-[15px] flex"><div className="w-px h-[26px] bg-[#b8b4a0]" /><Grip /></div>
        <Tool n="tool" />
        <Sep w="w-[6px]" />
        {['zoomfit', 'zoomarea', 'zoominout', 'zoomsel', 'rotate', 'pan', 'view'].map((n) => <Tool key={n} n={n} />)}
        <Drop w="w-[14px]" />
        <Sep w="w-[10px]" />
        <Tool n="wire" />
        <Tool n="hidden" />
        <Tool n="hlr" />
        <Tool n="shadededge" on />
        <Tool n="shaded" />
        <Sep w="w-[6px]" />
        <Tool n="shadow" />
        <Tool n="section" />
        <Tool n="rw" />
        <div className="w-[13px]"><Grip /></div>
        <Tool n="ebook" />
        <div className="w-px h-[28px] bg-[#b8b4a0] ml-[2px]" />
      </div>

      {/* command manager */}
      <div className="h-[61px] shrink-0 flex text-[12.200px]">
        <div className="w-[1275px] flex border-r-2 border-r-[#aca899]">
          <div className="w-[14px] pt-[4px] pl-[6px] flex">
            <div className="w-[4px] h-[54px] border border-[#b8b4a0] bg-[#f6f4ea] rounded-[1px]" />
          </div>
          <div className="w-[77px] h-[56px] mt-[3px] bg-white border border-[#8ea4c0] rounded-[3px] flex">
            <div className="flex-1 flex flex-col items-center pt-[4px]">
              <Icon n="fillet" />
              <div className="leading-[16px] mt-[1px]">Prvky</div>
            </div>
            <div className="w-[14px] border-l border-[#8ea4c0] pt-[26px]">
              <Drop w="w-full" />
            </div>
          </div>
          <div className="w-[79px] h-[56px] mt-[3px] bg-[#dce2e8] flex">
            <div className="flex-1 flex flex-col items-center pt-[4px] pl-[2px]">
              <Icon n="sketch" />
              <div className="leading-[16px] mt-[1px]">Skica</div>
            </div>
            <div className="w-[14px] pt-[26px]">
              <Drop w="w-full" />
            </div>
          </div>
          <CmdSep />
          <CmdBtn n="boss" a="Přidání" b="vysunut..." />
          <CmdBtn n="cut" a="Odebrání" b="vysunut..." />
          <CmdBtn n="revolve" a="Přidání" b="otočením" />
          <CmdBtn n="revolvecut" a="Odebrání" b="otočením" />
          <CmdBtn n="sweep" a="Přidání" b="tažení..." />
          <CmdBtn n="loft" a="Přidání" b="spojení..." />
          <CmdSep />
          <CmdBtn n="fillet" a="Zaoblit" />
          <CmdBtn n="chamfer" a="Zkosit" />
          <CmdBtn n="rib" a="Žebro" />
          <CmdBtn n="shell" a="Skořepi..." />
          <CmdBtn n="draft" a="Úkos" />
          <CmdBtn n="hole" a="Průvodce" b="dírami" />
          <CmdSep />
          <CmdBtn n="linear" a="Lineární" b="pole" />
          <CmdBtn n="circular" a="Kruhové" b="pole" />
          <CmdBtn n="mirror" a="Zrcadlit" />
          <CmdSep />
          <CmdBtn n="refgeom" a="Referen..." b="geometrie" w="w-[62px]" />
          <div className="pt-[28px]"><Drop w="w-[14px]" /></div>
          <CmdBtn n="curves" a="Křivky" w="w-[68px]" />
          <div className="pt-[28px]"><Drop w="w-[8px]" /></div>
        </div>
      </div>

      {/* main */}
      <div className="h-[806px] shrink-0 flex">
        <div className="flex-1 flex border-t-2 border-t-black min-w-0">
          <FeatureTree />
          <Viewport />
        </div>
        <TaskPane />
      </div>

      {/* status bar */}
      <div className="h-[22px] shrink-0 border-t-2 border-t-[#fff] flex items-center justify-end pr-[2px]">
        <div className="h-[18px] w-px bg-[#c8c4b0] mr-[5px]" />
        <div className="h-[18px] w-px bg-[#c8c4b0] mr-[11px]" />
        <span>Úprava Díl</span>
        <div className="h-[18px] w-px bg-[#c8c4b0] ml-[4px]" />
        <div className="h-[18px] w-px bg-[#c8c4b0] ml-[5px]" />
        <div className="h-[18px] w-px bg-[#c8c4b0] ml-[8px]" />
        <div className="w-[12px] h-[14px] ml-[15px] bg-[#ffffc0] border-t-2 border-t-[#2050a0] flex items-center justify-center text-[12px] font-bold leading-none text-[#009000]">?</div>
        <svg width="12" height="12" viewBox="0 0 12 12" className="ml-[57px]">
          <path d="M9 2h2M6 5h2M9 5h2M3 8h2M6 8h2M9 8h2" stroke="#a8a490" strokeWidth="2" strokeDasharray="2 1" />
        </svg>
      </div>

      {/* taskbar */}
      <div className="h-[72px] shrink-0 bg-[linear-gradient(#4a90f0,#3c80ec_3%,#245edc_8%,#245edc_94%,#1a48b8)] flex text-[13px] text-white">
        <div className="w-[115px] h-[36px] mt-[4px] rounded-r-[10px] bg-[linear-gradient(#5aa85a,#3c923c_30%,#3a8a3a_85%,#2c6e2c)] flex items-center pl-[11px] shadow-[inset_-2px_0_3px_#1c5c1c]">
          <svg width="24" height="24" viewBox="0 0 24 24">
            <path d="M2 5l9-2v8H2Z" fill="#e8642c" />
            <path d="M13 3l9 2v7h-9Z" fill="#8cc63e" />
            <path d="M2 13h9v8l-9-2Z" fill="#4a90e8" />
            <path d="M13 14h9v7l-9 2Z" fill="#f8c828" />
          </svg>
          <span className="ml-[6px] text-[22px] font-bold italic font-['Liberation_Sans',sans-serif] [text-shadow:1px_1px_1px_#205020]">Start</span>
        </div>
        <div className="ml-[10px] mt-[4px] h-[62px]"><Dots /></div>
        <div className="flex gap-[7px] ml-[8px] mt-[11px] h-[20px]">
          {quick.map((q, i) => (
            <Svg key={i} s={20} v={20}>{q}</Svg>
          ))}
        </div>
        <div className="ml-[42px] mt-[4px] h-[62px]"><Dots /></div>
        <div className="flex gap-[3px] ml-[4px] mt-[8px] h-[27px]">
          <TaskBtn
            label="MS4 - LAC"
            icon={<path d="M2 6V3h6l2 3h8v12H2Z" fill="#f8d870" stroke="#a08030" />}
          />
          <TaskBtn icon={wordDoc} label="10 Rozšiřující uči..." />
          <TaskBtn icon={wordDoc} label="06 SUF 16 CNC...." />
          <TaskBtn icon={swLogo} label="SolidWorks 200..." active />
        </div>
        <div className="ml-[95px] mt-[4px] h-[62px]"><Dots /></div>
        <div className="w-[19px] h-[19px] ml-[7px] mt-[28px] bg-[#3c7ce8] flex items-center justify-center">CS</div>
        <div className="flex-1 ml-[20px] mt-[3px] h-[69px] bg-[#0f8ee9] border-t border-t-[#20b0f8] relative flex flex-col items-center pl-[24px] pt-[13px] gap-[5px]">
          <svg width="14" height="18" viewBox="0 0 14 18" className="absolute left-[15px] top-[3px]">
            <rect x="1" y="0" width="12" height="18" rx="5" fill="#1020c0" />
            <path d="M4 5 10 13 7 16V2l3 3-6 8" fill="none" stroke="#e01020" strokeWidth="1.400" />
          </svg>
          <div className="absolute left-[-8px] top-[28px] w-[16px] h-[16px] rounded-full bg-[#3aa0f0] border border-white flex items-center justify-center">
            <svg width="8" height="8" viewBox="0 0 8 8">
              <path d="M5 1 2 4l3 3" fill="none" stroke="#fff" strokeWidth="1.800" />
            </svg>
          </div>
          <svg width="20" height="16" viewBox="0 0 20 16" className="absolute left-[12px] top-[25px]">
            <rect x="1" y="2" width="8" height="7" fill="#506070" stroke="#e0e8f0" />
            <path d="M5 9v5M2 14h6" stroke="#e0e8f0" />
            <path d="M12 4c2 2 2 4 0 6M15 2c3 3 3 7 0 10" fill="none" stroke="#e0e8f0" />
          </svg>
          <span>12:24</span>
          <span>sobota</span>
        </div>
      </div>
    </div>
  );
}
